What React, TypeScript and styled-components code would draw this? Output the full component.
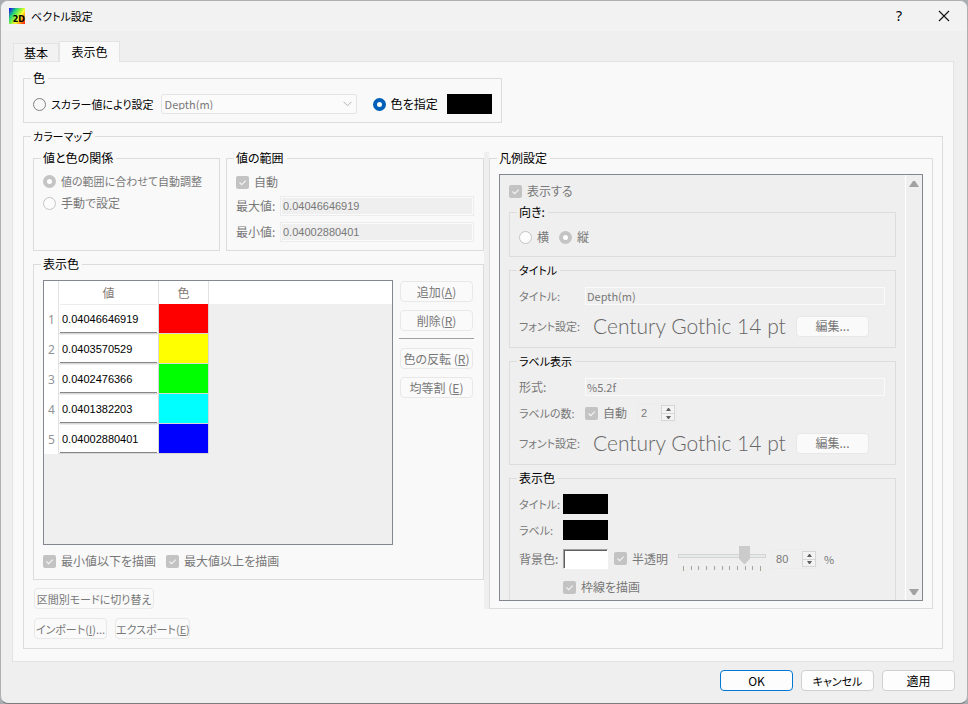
import React from "react";
import styled, { createGlobalStyle, css } from "styled-components";

const ui = `"Noto Sans CJK JP", sans-serif`;
const numeric = `"Liberation Sans", "Noto Sans CJK JP", sans-serif`;
const line = "#dcdcdc";
const muted = "#787878";
const checkMark = `url("data:image/svg+xml,%3Csvg xmlns='http://www.w3.org/2000/svg' viewBox='0 0 13 13'%3E%3Cpath d='M3.5 6.5l2.2 2.2 4-4' fill='none' stroke='%23f4f4f4' stroke-width='1.1'/%3E%3C/svg%3E")`;

const GlobalStyle = createGlobalStyle`
  * { box-sizing: border-box; }
  body { margin: 0; background: #a9acb0; }
  button, input, select { font: inherit; color: inherit; margin: 0; }
`;

const Dialog = styled.div`
  height: 100vh;
  display: flex;
  flex-direction: column;
  background: #efefef;
  border: 1px solid #b0b0b2;
  border-bottom-color: #7c7c7c;
  border-radius: 8px;
  overflow: hidden;
  font-family: ${ui};
  font-size: 12px;
  line-height: 12px;
  font-feature-settings: "palt";
  white-space: nowrap;
  color: #000;
`;

const TitleBar = styled.header`
  display: flex;
  align-items: center;
  height: 30px;
  padding: 0 17px 0 8px;
  background: #f2f2f3;
`;

const AppIcon = styled.span`
  display: flex;
  align-items: flex-end;
  justify-content: flex-end;
  width: 16px;
  height: 16px;
  background: linear-gradient(125deg, #1818e8 5%, #20d080 28%, #80f040 45%, #ffff30 62%, #ff7010 85%, #ff1010);
  font: bold 8px/8px "DejaVu Sans", sans-serif;
`;

const Caption = styled.h1`
  flex: 1;
  margin: 0 0 0 6px;
  font-size: 11px;
  line-height: 14px;
  font-weight: 400;
`;

const CaptionButton = styled.button`
  display: flex;
  align-items: center;
  justify-content: center;
  width: 12px;
  height: 20px;
  margin-left: 33px;
  padding: 0;
  border: 0;
  background: none;
  font: 14px/16px "Noto Sans", sans-serif;
`;

const Tabs = styled.nav`
  display: flex;
  align-items: flex-end;
  height: 30px;
  padding-left: 12px;
`;

const Tab = styled.button<{ $active?: boolean }>`
  height: ${(p) => (p.$active ? 21 : 18)}px;
  width: ${(p) => (p.$active ? 61 : 46)}px;
  padding: 0;
  border: 1px solid #e3e3e3;
  border-bottom: 0;
  background: ${(p) => (p.$active ? "#f9f9f9" : "#f2f2f2")};
  z-index: ${(p) => (p.$active ? 1 : 0)};
  margin-bottom: ${(p) => (p.$active ? -1 : 0)}px;
`;

const Panel = styled.main`
  flex: 1;
  display: flex;
  flex-direction: column;
  align-items: flex-start;
  gap: 7px;
  margin: 0 13px 0 11px;
  padding: 10px 10px 12px;
  border: 1px solid #e3e3e3;
  background: #f9f9f9;
`;

const Group = styled.fieldset<{ $grow?: boolean }>`
  display: flex;
  flex-direction: column;
  min-width: 0;
  margin: 0;
  padding: 0;
  border: 1px solid ${line};
  ${(p) =>
    p.$grow &&
    css`
      flex: 1;
      align-self: stretch;
    `}
`;

const Legend = styled.legend<{ $small?: boolean }>`
  margin-left: 7px;
  padding: 0 3px 0 2px;
  height: 12px;
  font-size: ${(p) => (p.$small ? 11 : 12)}px;
`;

const Row = styled.div<{ $gap?: number; $h?: number }>`
  display: flex;
  align-items: center;
  gap: ${(p) => p.$gap ?? 0}px;
  min-height: ${(p) => p.$h ?? 20}px;
`;

const ColorRow = styled(Row)`
  padding: 10px 9px 8px;
`;

const Choice = styled.label<{ $off?: boolean; $small?: boolean }>`
  display: flex;
  align-items: center;
  gap: 5px;
  font-size: ${(p) => (p.$small ? 11 : 12)}px;
  color: ${(p) => (p.$off ? muted : "#000")};
`;

const Radio = styled.input.attrs({ type: "radio" })`
  appearance: none;
  flex: none;
  width: 13px;
  height: 13px;
  border: 1px solid #808080;
  border-radius: 50%;
  background: #f7f7f7;
  &:disabled {
    border-color: #c4c4c4;
    background: #fcfcfc;
  }
  &:checked {
    border: 4px solid #005fb8;
    background: #fff;
  }
  &:checked:disabled {
    border-color: #c4c4c4;
  }
`;

const Check = styled.input.attrs({ type: "checkbox" })`
  appearance: none;
  flex: none;
  width: 13px;
  height: 13px;
  border-radius: 2px;
  background: #c3c3c3 ${checkMark};
`;

const Select = styled.select`
  appearance: none;
  width: 196px;
  height: 20px;
  padding: 0 3px;
  border: 1px solid #e5e5e5;
  border-radius: 2px;
  background: #fbfbfb
    url("data:image/svg+xml,%3Csvg xmlns='http://www.w3.org/2000/svg' viewBox='0 0 9 6'%3E%3Cpath d='M.5 .8l4 4 4-4' fill='none' stroke='%23b0b0b0'/%3E%3C/svg%3E")
    no-repeat right 4px center / 9px 6px;
  font-size: 11px;
  color: ${muted};
  opacity: 1;
`;

const Swatch = styled.button<{ $color: string; $sunken?: boolean }>`
  width: 45px;
  height: 20px;
  padding: 0;
  border: 0;
  background: ${(p) => p.$color};
  ${(p) =>
    p.$sunken &&
    css`
      border: 1px solid #fff;
      border-top: 1px solid #a0a0a0;
      border-left: 1px solid #a0a0a0;
      box-shadow: inset 1px 1px 0 #606060;
    `}
`;

const MapBody = styled.div`
  flex: 1;
  display: flex;
  flex-direction: column;
  gap: 9px;
  padding: 10px 9px 9px;
`;

const Split = styled.div`
  flex: 1;
  display: grid;
  grid-template-columns: minmax(0, 451fr) 5px minmax(0, 444fr);
`;

const Splitter = styled.div`
  background: #efefef;
`;

const LeftPane = styled.div`
  display: flex;
  flex-direction: column;
  align-items: flex-start;
`;

const TopGroups = styled.div`
  align-self: stretch;
  display: grid;
  grid-template-columns: 187fr 258fr;
  gap: 6px;
  margin-bottom: 7px;
`;

const RadioList = styled.div`
  display: flex;
  flex-direction: column;
  padding: 6px 9px;
`;

const RangeForm = styled.div`
  display: flex;
  flex-direction: column;
  gap: 6px;
  padding: 8px 9px 8px;
  color: ${muted};
  & > :first-child {
    margin-bottom: -2px;
  }
`;

const FieldLabel = styled.label<{ $w: number; $small?: boolean }>`
  flex: none;
  width: ${(p) => p.$w}px;
  font-size: ${(p) => (p.$small ? 11 : 12)}px;
  color: ${muted};
`;

const Field = styled.input`
  flex: 1;
  min-width: 0;
  height: 20px;
  padding: 0 2px;
  border: 1px solid #ececec;
  background: #efefef;
  box-shadow: inset 0 0 0 1px #fbfbfb;
  font-family: ${numeric};
  font-size: 11px;
  color: ${muted};
`;

const PlainField = styled(Field)`
  height: 18px;
  padding: 0 1px;
  border-color: #fafafa;
  box-shadow: none;
  font-family: ${ui};
`;

const TableArea = styled.div`
  flex: 1;
  display: grid;
  grid-template-columns: minmax(0, 1fr) 75px;
  gap: 6px;
  padding: 10px 9px 6px;
`;

const TableBox = styled.div`
  border: 1px solid #828790;
  background: #efefef;
`;

const Table = styled.table`
  width: 100%;
  table-layout: fixed;
  border-collapse: separate;
  border-spacing: 0;
`;

const HeadCell = styled.th<{ $w?: number; $line?: boolean }>`
  width: ${(p) => (p.$w ? `${p.$w}px` : "auto")};
  height: 23px;
  padding: 0;
  border-right: ${(p) => (p.$line ? "1px solid #e2e2e2" : 0)};
  background: #fff;
  font-weight: 400;
  color: #857a74;
`;

const RowHead = styled.th`
  height: 30px;
  padding: 2px 0 0 1px;
  border-right: 1px solid #e2e2e2;
  background: #fff;
  font: 12px/14px "Noto Sans", sans-serif;
  color: #909498;
`;

const Cell = styled.td<{ $color?: string }>`
  height: 30px;
  padding: 0 1px;
  border-right: 1px solid #d8d8d8;
  border-bottom: 1px solid #d8d8d8;
  background: ${(p) => p.$color ?? "#fff"};
`;

const CellInput = styled.input`
  display: block;
  width: 100%;
  height: 29px;
  padding: 0 2px;
  border: 0;
  border-top: 1px solid #ececec;
  border-bottom: 1px solid #868686;
  background: #fff;
  font-family: ${numeric};
  font-size: 11px;
`;

const ButtonColumn = styled.div`
  display: flex;
  flex-direction: column;
  gap: 8px;
  padding-top: 1px;
`;

const Rule = styled.hr`
  width: 100%;
  height: 1px;
  margin: -1px 0 1px;
  border: 0;
  background: #a0a0a0;
`;

const Button = styled.button<{ $w?: number; $small?: boolean; $kind?: "default" | "normal" }>`
  flex: none;
  width: ${(p) => p.$w ?? 73}px;
  height: 21px;
  margin: 0 1px;
  padding: 0;
  border: 1px solid ${(p) => (p.$kind === "default" ? "#0078d4" : p.$kind ? "#d0d0d0" : "#e8e8e8")};
  border-radius: 4px;
  background: ${(p) => (p.$kind ? "#fdfdfd" : "#fafafa")};
  font-size: ${(p) => (p.$small ? 11 : 12)}px;
  color: ${(p) => (p.$kind ? "#000" : muted)};
`;

const ModeRow = styled.div`
  display: flex;
  padding-top: 8px;
`;

const DrawRow = styled(Row)`
  padding: 0 9px 8px;
  min-height: 28px;
`;

const ScrollFrame = styled.div`
  flex: 1 1 0;
  min-height: 0;
  display: flex;
  margin: 10px 9px 7px;
  border: 1px solid #828790;
  background: #efefef;
`;

const Viewport = styled.div`
  flex: 1;
  min-width: 0;
  height: 0;
  min-height: 100%;
  overflow-y: auto;
  scrollbar-width: none;
  display: flex;
  flex-direction: column;
  gap: 7px;
  padding: 6px 9px 0;
  & > label {
    flex: none;
    height: 20px;
    margin-bottom: -2px;
  }
  & > fieldset {
    flex: none;
  }
`;

const ScrollBar = styled.div`
  display: flex;
  flex-direction: column;
  justify-content: space-between;
  align-items: center;
  width: 17px;
  padding: 6px 0 5px;
  border-left: 1px solid #fff;
`;

const LegendForm = styled.div<{ $gap: number }>`
  display: flex;
  flex-direction: column;
  gap: ${(p) => p.$gap}px;
  padding: 10px 10px 11px 9px;
`;

const DirectionRow = styled(Row)`
  padding: 9px;
`;

const FontRow = styled(Row)<{ $top?: number }>`
  margin-top: ${(p) => p.$top ?? 0}px;
  height: 20px;
`;

const Preview = styled.output`
  flex: 0 0 210px;
  padding-left: 8px;
  font: 300 21px/20px Lato, sans-serif;
  color: #666;
`;

const Spin = styled.span<{ $w: number }>`
  display: flex;
  align-items: center;
  width: ${(p) => p.$w}px;
  height: 20px;
  padding: 0 1px 0 3px;
  border: 1px solid #ececec;
  color: ${muted};
`;

const SpinInput = styled.input`
  flex: 1;
  width: 0;
  min-width: 0;
  padding: 0;
  border: 0;
  background: none;
  font-family: ${numeric};
  font-size: 11px;
`;

const Steps = styled.span`
  display: grid;
  grid-template-rows: 7px 7px;
  width: 14px;
  border: 1px solid #d6d6d6;
`;

const Step = styled.button`
  display: flex;
  align-items: center;
  justify-content: center;
  padding: 0;
  border: 0;
  background: #f3f3f3;
  & + & {
    border-top: 1px solid #d6d6d6;
  }
`;

const SliderBox = styled.div`
  width: 88px;
`;

const Slider = styled.input.attrs({ type: "range" })`
  appearance: none;
  display: block;
  width: 88px;
  height: 19px;
  background: none;
  &::-webkit-slider-runnable-track {
    height: 4px;
    border: 1px solid #d4d4d4;
    background: #e7eaea;
  }
  &::-webkit-slider-thumb {
    appearance: none;
    width: 11px;
    height: 19px;
    margin-top: -9px;
    background: #cbcbcb;
    clip-path: polygon(0 0, 100% 0, 100% 70%, 50% 100%, 0 70%);
  }
`;

const Footer = styled.footer`
  display: flex;
  justify-content: flex-end;
  gap: 6px;
  padding: 8px 11px 12px;
`;

const Arrow = ({ down, size = 5, color = "#606060" }: { down?: boolean; size?: number; color?: string }) => (
  <svg width={size} height={size === 5 ? 3 : 6} viewBox="0 0 10 6" preserveAspectRatio="none" aria-hidden>
    <path d={down ? "M0 0h10L6 6H4z" : "M0 6h10L6 0H4z"} fill={color} />
  </svg>
);

const SpinBox = ({ id, value, width, label }: { id: string; value: string; width: number; label: string }) => (
  <Spin $w={width}>
    <SpinInput id={id} aria-label={label} defaultValue={value} disabled />
    <Steps>
      <Step disabled aria-label="増やす"><Arrow /></Step>
      <Step disabled aria-label="減らす"><Arrow down /></Step>
    </Steps>
  </Spin>
);

const CheckBox = ({ text }: { text: string }) => (
  <Choice $off>
    <Check defaultChecked disabled />
    {text}
  </Choice>
);

const FontSetting = () => (
  <>
    <FieldLabel as="span" $w={66} $small>フォント設定:</FieldLabel>
    <Preview>Century Gothic 14 pt</Preview>
    <Button disabled>編集...</Button>
  </>
);

const rows = [
  ["0.04046646919", "#ff0000"],
  ["0.0403570529", "#ffff00"],
  ["0.0402476366", "#00ff00"],
  ["0.0401382203", "#00ffff"],
  ["0.04002880401", "#0000ff"],
];

export default function App() {
  return (
    <>
      <GlobalStyle />
      <Dialog role="dialog" aria-labelledby="caption">
        <TitleBar>
          <AppIcon>2D</AppIcon>
          <Caption id="caption">ベクトル設定</Caption>
          <CaptionButton aria-label="ヘルプ">?</CaptionButton>
          <CaptionButton aria-label="閉じる">
            <svg width="12" height="12" viewBox="0 0 12 12" aria-hidden>
              <path d="M1 1l10 10M11 1L1 11" stroke="#111" strokeWidth="1.1" />
            </svg>
          </CaptionButton>
        </TitleBar>

        <Tabs>
          <Tab>基本</Tab>
          <Tab $active>表示色</Tab>
        </Tabs>

        <Panel>
          <Group>
            <Legend>色</Legend>
            <ColorRow $gap={16}>
              <Row $gap={7}>
                <Choice $small>
                  <Radio name="source" />
                  スカラー値により設定
                </Choice>
                <Select aria-label="スカラー値" disabled>
                  <option>Depth(m)</option>
                </Select>
              </Row>
              <Row $gap={9}>
                <Choice>
                  <Radio name="source" defaultChecked />
                  色を指定
                </Choice>
                <Swatch $color="#000" aria-label="色" />
              </Row>
            </ColorRow>
          </Group>

          <Group $grow>
            <Legend $small>カラーマップ</Legend>
            <MapBody>
              <Split>
                <LeftPane>
                  <TopGroups>
                    <Group>
                      <Legend>値と色の関係</Legend>
                      <RadioList>
                        <Row $h={22}>
                          <Choice $off $small>
                            <Radio name="relation" defaultChecked disabled />
                            値の範囲に合わせて自動調整
                          </Choice>
                        </Row>
                        <Row $h={22}>
                          <Choice $off>
                            <Radio name="relation" disabled />
                            手動で設定
                          </Choice>
                        </Row>
                      </RadioList>
                    </Group>
                    <Group>
                      <Legend>値の範囲</Legend>
                      <RangeForm>
                        <Row><CheckBox text="自動" /></Row>
                        <Row>
                          <FieldLabel $w={44} htmlFor="max">最大値:</FieldLabel>
                          <Field id="max" defaultValue="0.04046646919" disabled />
                        </Row>
                        <Row>
                          <FieldLabel $w={44} htmlFor="min">最小値:</FieldLabel>
                          <Field id="min" defaultValue="0.04002880401" disabled />
                        </Row>
                      </RangeForm>
                    </Group>
                  </TopGroups>

                  <Group $grow>
                    <Legend>表示色</Legend>
                    <TableArea>
                      <TableBox>
                        <Table>
                          <thead>
                            <tr>
                              <HeadCell $w={15} $line />
                              <HeadCell $w={100} $line>値</HeadCell>
                              <HeadCell $w={50} $line>色</HeadCell>
                              <HeadCell />
                            </tr>
                          </thead>
                          <tbody>
                            {rows.map(([value, color], i) => (
                              <tr key={value}>
                                <RowHead>{i + 1}</RowHead>
                                <Cell><CellInput aria-label={`値 ${i + 1}`} defaultValue={value} /></Cell>
                                <Cell $color={color} />
                              </tr>
                            ))}
                          </tbody>
                        </Table>
                      </TableBox>
                      <ButtonColumn>
                        <Button disabled>追加(<u>A</u>)</Button>
                        <Button disabled>削除(<u>R</u>)</Button>
                        <Rule />
                        <Button disabled>色の反転 (<u>R</u>)</Button>
                        <Button disabled>均等割 (<u>E</u>)</Button>
                      </ButtonColumn>
                    </TableArea>
                    <DrawRow $gap={10}>
                      <CheckBox text="最小値以下を描画" />
                      <CheckBox text="最大値以上を描画" />
                    </DrawRow>
                  </Group>

                  <ModeRow>
                    <Button $w={120} $small disabled>区間別モードに切り替え</Button>
                  </ModeRow>
                </LeftPane>

                <Splitter />

                <Group>
                  <Legend>凡例設定</Legend>
                  <ScrollFrame>
                    <Viewport>
                      <CheckBox text="表示する" />
                      <Group>
                        <Legend>向き:</Legend>
                        <DirectionRow $gap={10} $h={38}>
                          <Choice $off><Radio name="direction" disabled />横</Choice>
                          <Choice $off><Radio name="direction" defaultChecked disabled />縦</Choice>
                        </DirectionRow>
                      </Group>
                      <Group>
                        <Legend $small>タイトル</Legend>
                        <LegendForm $gap={10}>
                          <Row>
                            <FieldLabel $w={66} $small htmlFor="title">タイトル:</FieldLabel>
                            <PlainField id="title" defaultValue="Depth(m)" disabled />
                          </Row>
                          <FontRow><FontSetting /></FontRow>
                        </LegendForm>
                      </Group>
                      <Group>
                        <Legend $small>ラベル表示</Legend>
                        <LegendForm $gap={6}>
                          <Row>
                            <FieldLabel $w={66} htmlFor="format">形式:</FieldLabel>
                            <PlainField id="format" defaultValue="%5.2f" disabled />
                          </Row>
                          <Row $gap={10}>
                            <Row>
                              <FieldLabel $w={66} $small htmlFor="count">ラベルの数:</FieldLabel>
                              <CheckBox text="自動" />
                            </Row>
                            <SpinBox id="count" label="ラベルの数" value="2" width={40} />
                          </Row>
                          <FontRow $top={4}><FontSetting /></FontRow>
                        </LegendForm>
                      </Group>
                      <Group>
                        <Legend>表示色</Legend>
                        <LegendForm $gap={6}>
                          <Row>
                            <FieldLabel as="span" $w={44} $small>タイトル:</FieldLabel>
                            <Swatch $color="#000" aria-label="タイトルの色" disabled />
                          </Row>
                          <Row>
                            <FieldLabel as="span" $w={44} $small>ラベル:</FieldLabel>
                            <Swatch $color="#000" aria-label="ラベルの色" disabled />
                          </Row>
                          <Row $gap={6} $h={25}>
                            <Row>
                              <FieldLabel as="span" $w={44}>背景色:</FieldLabel>
                              <Swatch $color="#fff" $sunken aria-label="背景色" disabled />
                            </Row>
                            <Row $gap={10}>
                              <CheckBox text="半透明" />
                              <SliderBox>
                                <Slider aria-label="不透明度" min={0} max={100} defaultValue={80} disabled />
                                <svg width="88" height="6" viewBox="0 0 88 6" display="block" aria-hidden>
                                  {Array.from({ length: 11 }, (_, i) => (
                                    <rect key={i} x={Math.round(5 + i * 7.7)} y="1" width="1" height={i % 10 ? 4 : 5} fill="#a5a595" />
                                  ))}
                                </svg>
                              </SliderBox>
                            </Row>
                            <SpinBox id="opacity" label="不透明度の値" value="80" width={46} />
                            <FieldLabel $w={12} $small htmlFor="opacity">%</FieldLabel>
                          </Row>
                          <Row>
                            <FieldLabel as="span" $w={44} />
                            <CheckBox text="枠線を描画" />
                          </Row>
                        </LegendForm>
                      </Group>
                    </Viewport>
                    <ScrollBar>
                      <Arrow size={10} color="#a2a2a2" />
                      <Arrow down size={10} color="#a2a2a2" />
                    </ScrollBar>
                  </ScrollFrame>
                </Group>
              </Split>
              <Row $gap={6}>
                <Button $small disabled>インポート(<u>I</u>)...</Button>
                <Button $w={75} $small disabled>エクスポート(<u>E</u>)</Button>
              </Row>
            </MapBody>
          </Group>
        </Panel>

        <Footer>
          <Button $kind="default">OK</Button>
          <Button $kind="normal" $small>キャンセル</Button>
          <Button $kind="normal">適用</Button>
        </Footer>
      </Dialog>
    </>
  );
}
